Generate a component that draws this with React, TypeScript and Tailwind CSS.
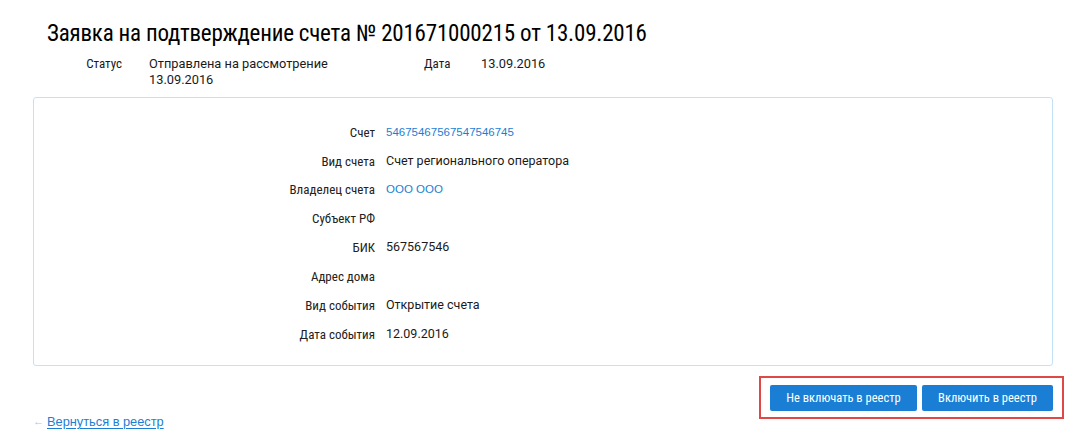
const rows: { label: string; value: string; link?: boolean }[] = [
  { label: "Счет", value: "54675467567547546745", link: true },
  { label: "Вид счета", value: "Счет регионального оператора" },
  { label: "Владелец счета", value: "ООО ООО", link: true },
  { label: "Субъект РФ", value: "" },
  { label: "БИК", value: "567567546" },
  { label: "Адрес дома", value: "" },
  { label: "Вид события", value: "Открытие счета" },
  { label: "Дата события", value: "12.09.2016" },
];

const narrow = { fontFamily: "'Liberation Sans Narrow', 'Roboto Condensed', Roboto, sans-serif" };

export default function App() {
  return (
    <div
      className="w-[1074px] h-[438px] overflow-hidden bg-white text-[#1a1a1a]"
      style={{ fontFamily: "Roboto, 'Liberation Sans', sans-serif" }}
    >
      {/* HEADER */}
      <h1 className="pl-[47px] pt-[19px] text-[23px] leading-[30px] tracking-[-0.2px] text-black" style={narrow}>
        Заявка на подтверждение счета № 201671000215 от 13.09.2016
      </h1>

      <div className="flex pt-[7px] text-[12.5px] leading-[16px]">
        <div className="w-[122px] text-right text-[13px]" style={narrow}>Статус</div>
        <div className="ml-[27px] w-[200px] text-[12.8px]">
          Отправлена на рассмотрение 13.09.2016
        </div>
        <div className="ml-[75px] w-[57px] text-[13px]" style={narrow}>Дата</div>
        <div className="text-[12.8px]">13.09.2016</div>
      </div>

      {/* DETAILS */}
      <div className="mx-[33px] w-[1020px] mt-[9px] h-[269px] border border-[#c4e2f7] rounded-[3px] pt-[20px]">
        {rows.map((r) => (
          <div key={r.label} className="flex items-center h-[28.85px]">
            <div className="w-[341px] text-right text-[13px] text-[#222]" style={narrow}>
              {r.label}
            </div>
            <div
              className={
                r.link
                  ? "ml-[11px] text-[11.5px] text-[#1a7fd4]"
                  : "ml-[11px] text-[12.5px] text-[#1a1a1a]"
              }
              style={r.link ? { fontFamily: "'Liberation Sans', Arial, sans-serif" } : undefined}
            >
              {r.value}
            </div>
          </div>
        ))}
      </div>

      {/* ACTIONS */}
      <div className="flex items-end justify-between pl-[33px] pr-[10px] mt-[10px]">
        <a
          href="#"
          className="flex items-center gap-[3px] text-[12.8px] text-[#1a7fd4] mb-[-12px]"
          style={{ fontFamily: "'Liberation Sans', Arial, sans-serif" }}
        >
          <span className="text-[#9cc8ec] text-[11px]">←</span>
          <span className="underline underline-offset-2">Вернуться в реестр</span>
        </a>
        <div className="flex gap-[5px] border-2 border-[#e04848] px-[9px] pt-[7px] pb-[6px]">
          <button className="h-[26px] w-[147px] bg-[#1a7fd4] text-white text-[12.5px] rounded-[2px]" style={narrow}>
            Не включать в реестр
          </button>
          <button className="h-[26px] w-[131px] bg-[#1a7fd4] text-white text-[12.5px] rounded-[2px]" style={narrow}>
            Включить в реестр
          </button>
        </div>
      </div>
    </div>
  );
}
